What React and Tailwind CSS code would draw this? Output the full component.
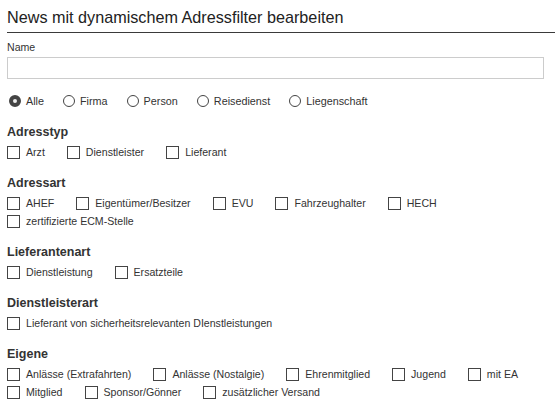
const sections = [
  { title: 'Adresstyp', items: ['Arzt', 'Dienstleister', 'Lieferant'] },
  {
    title: 'Adressart',
    items: ['AHEF', 'Eigentümer/Besitzer', 'EVU', 'Fahrzeughalter', 'HECH', 'zertifizierte ECM-Stelle'],
  },
  { title: 'Lieferantenart', items: ['Dienstleistung', 'Ersatzteile'] },
  { title: 'Dienstleisterart', items: ['Lieferant von sicherheitsrelevanten DIenstleistungen'] },
  {
    title: 'Eigene',
    items: [
      'Anlässe (Extrafahrten)',
      'Anlässe (Nostalgie)',
      'Ehrenmitglied',
      'Jugend',
      'mit EA',
      'Mitglied',
      'Sponsor/Gönner',
      'zusätzlicher Versand',
    ],
  },
];

const radios = ['Alle', 'Firma', 'Person', 'Reisedienst', 'Liegenschaft'];

function Radio({ label, checked }) {
  return (
    <label className="flex items-center gap-[5px] h-[18px]">
      <span
        className={
          checked
            ? 'w-[12px] h-[12px] rounded-full border-[4px] border-[#444] bg-[#eee]'
            : 'w-[12px] h-[12px] rounded-full border border-[#444] bg-white'
        }
      />
      <span>{label}</span>
    </label>
  );
}

function Checkbox({ label }) {
  return (
    <label className="flex items-center gap-[6px] h-[18px]">
      <span className="w-[13px] h-[13px] border border-[#444] bg-white" />
      <span>{label}</span>
    </label>
  );
}

export default function App() {
  return (
    <div className="w-[555px] h-[413px] overflow-hidden bg-white text-[#333] text-[10.6px] leading-[13px] font-['Liberation_Sans',Arial,sans-serif]">
      <h1 className="ml-[7px] pt-[7px] pb-[5px] border-b border-[#3a3a3a] text-[16.2px] leading-[20px] text-[#222]">
        News mit dynamischem Adressfilter bearbeiten
      </h1>
      <div className="pl-[7px] pr-[11px]">
        <div className="mt-[8px] mb-[3px]">Name</div>
        <input type="text" className="block w-full h-[22px] border border-[#ccc] outline-none" />
        <div className="mt-[13px] flex items-center gap-x-[19px] pl-[2px] text-[10.8px]">
          {radios.map((r, i) => (
            <Radio key={r} label={r} checked={i === 0} />
          ))}
        </div>
        {sections.map((s) => (
          <section key={s.title} className="mt-[14px]">
            <h2 className="font-bold text-[12.5px] leading-[16px] mb-[3px]">{s.title}</h2>
            <div className="flex flex-wrap gap-x-[22px]">
              {s.items.map((it) => (
                <Checkbox key={it} label={it} />
              ))}
            </div>
          </section>
        ))}
      </div>
    </div>
  );
}
